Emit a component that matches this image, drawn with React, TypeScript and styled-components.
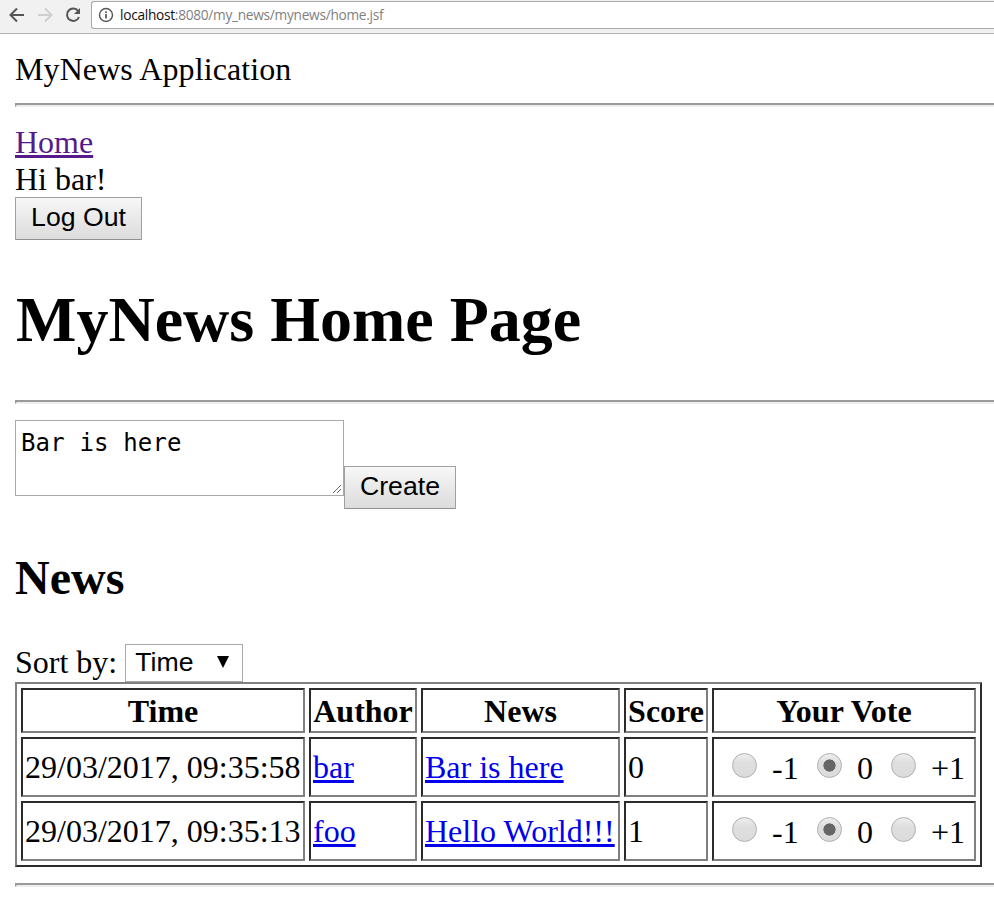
import React from "react";
import styled, { createGlobalStyle } from "styled-components";

const serif = '"Liberation Serif", "Times New Roman", serif';
const sans = '"Liberation Sans", Arial, sans-serif';

const Global = createGlobalStyle`
  * { box-sizing: border-box; }
  html, body { margin: 0; background: #fff; overflow: hidden; }
  body { font: 32px/37px ${serif}; color: #000; }
`;

const Screen = styled.div`
  width: 994px;
  height: 900px;
  overflow: hidden;
`;

const Toolbar = styled.header`
  height: 34px;
  padding: 1px 0 4px 8px;
  background: #f1f1f1;
  border-bottom: 1px solid #b4b4b4;
  display: flex;
  align-items: center;
`;

const NavIcon = styled.svg<{ $faded?: boolean }>`
  width: 18px;
  height: 18px;
  margin-right: 10px;
  flex: none;
  fill: none;
  stroke: ${(p) => (p.$faded ? "#d0d0d0" : "#555")};
  stroke-width: 2;
`;

const AddressBar = styled.div`
  flex: 1;
  height: 28px;
  margin-left: -1px;
  padding-left: 6px;
  display: flex;
  align-items: center;
  gap: 6px;
  background: #fff;
  border: 1px solid #a9a9a9;
  border-right: 0;
  border-radius: 3px 0 0 3px;
  font: 13.7px/20px "Open Sans", sans-serif;
  letter-spacing: -0.28px;
  color: #808080;
`;

const Host = styled.span`
  color: #111;
`;

const InfoIcon = styled.svg`
  width: 16px;
  height: 16px;
  fill: none;
  stroke: #555;
  stroke-width: 1.4;
`;

const Page = styled.main`
  padding: 16px 0 0 15px;
`;

const Line = styled.div<{ $spacing?: number }>`
  height: 37px;
  padding-top: 1px;
  letter-spacing: ${(p) => p.$spacing ?? 0}px;
  white-space: pre;
`;

const Rule = styled.hr`
  height: 4px;
  margin: 16px 0;
  border: 2px solid;
  border-color: #9a9a9a #eee #eee #9a9a9a;
  border-right: 0;
`;

const Link = styled.a<{ $visited?: boolean }>`
  color: ${(p) => (p.$visited ? "#551a8b" : "#0000ee")};
  text-decoration: underline;
  text-decoration-thickness: 3px;
  text-underline-offset: 2px;
  text-decoration-skip-ink: none;
`;

const Button = styled.button<{ $width: number }>`
  display: block;
  width: ${(p) => p.$width}px;
  height: 43px;
  padding: 0 0 3px;
  border: 1px solid #a0a0a0;
  border-bottom-color: #909090;
  border-radius: 1px;
  background: linear-gradient(#f7f7f7, #dcdcdc);
  font: 26.67px/30px ${sans};
  color: #000;
`;

const Title = styled.h1`
  height: 74px;
  margin: 43px 0;
  padding-left: 1px;
  font: bold 64px/74px ${serif};
`;

const Subtitle = styled.h2`
  height: 55px;
  margin: 41px 0 38px;
  font: bold 48px/55px ${serif};
`;

const CreateForm = styled.form`
  display: flex;
  align-items: flex-start;
  height: 89px;

  ${Button} {
    margin-top: 46px;
  }
`;

const Message = styled.div`
  position: relative;
  width: 329px;
  height: 76px;
  padding: 7px 5px;
  border: 1px solid #a9a9a9;
  font: 24px/30px "DejaVu Sans Mono", monospace;
  letter-spacing: 0.15px;
`;

const Grip = styled.svg`
  position: absolute;
  right: 2px;
  bottom: 2px;
  width: 8px;
  height: 8px;
  stroke: #666;
`;

const SortRow = styled.div`
  display: flex;
  height: 39px;
`;

const SortLabel = styled.span`
  padding-top: 1px;
`;

const SortBox = styled.div`
  width: 118px;
  height: 38px;
  margin: 1px 0 0 8px;
  padding: 0 13px 3px 9px;
  display: flex;
  align-items: center;
  justify-content: space-between;
  border: 1px solid #a9a9a9;
  font: 26.67px/30px ${sans};
`;

const Arrow = styled.svg`
  width: 12px;
  height: 12px;
  margin-top: 1px;
  fill: #000;
`;

const NewsTable = styled.table`
  width: 967px;
  height: 185px;
  table-layout: fixed;
  border-collapse: separate;
  border-spacing: 4px;
  border: 2px solid;
  border-color: #808080 #2c2c2c #2c2c2c #808080;
`;

const Column = styled.col<{ $width: number }>`
  width: ${(p) => p.$width}px;
`;

const Row = styled.tr<{ $height: number }>`
  height: ${(p) => p.$height}px;
`;

const cellBorder = "border: 2px solid; border-color: #2c2c2c #808080 #808080 #2c2c2c;";

const HeadCell = styled.th`
  ${cellBorder}
  padding: 2px 0 0;
  text-align: center;
  font-weight: bold;
  white-space: nowrap;
`;

const Cell = styled.td`
  ${cellBorder}
  padding: 0 2px;
  white-space: nowrap;
`;

const Votes = styled.div`
  display: flex;
  padding: 2px 0 0 16px;
`;

const Vote = styled.label<{ $width: number }>`
  display: flex;
  width: ${(p) => p.$width}px;
  gap: 15px;
`;

const Radio = styled.span<{ $on: boolean }>`
  flex: none;
  width: 25px;
  height: 25px;
  margin-top: 3px;
  border: 1px solid #b0b0b0;
  border-radius: 50%;
  background: ${(p) => (p.$on ? "radial-gradient(circle, #666 0 5.8px, transparent 6.4px), " : "")}
    linear-gradient(#eee, #dedede 38%, #dcdcdc);
`;

const rows = [
  { time: "29/03/2017, 09:35:58", author: "bar", news: "Bar is here", score: 0 },
  { time: "29/03/2017, 09:35:13", author: "foo", news: "Hello World!!!", score: 1 },
];

const options = [
  { label: "-1", width: 85 },
  { label: "0", width: 74 },
  { label: "+1", width: 76 },
];

export default function App() {
  return (
    <Screen>
      <Global />
      <Toolbar>
        <NavIcon viewBox="0 0 18 18">
          <path d="M16 9H3M9 2.500 2.500 9 9 15.500" />
        </NavIcon>
        <NavIcon viewBox="0 0 18 18" $faded>
          <path d="M2 9h13M9 2.500 15.500 9 9 15.500" />
        </NavIcon>
        <NavIcon viewBox="0 0 18 18">
          <path d="M14.200 5A6.200 6.200 0 1 0 15 11" />
          <path d="M16 2v6h-6z" fill="#555" stroke="none" />
        </NavIcon>
        <AddressBar>
          <InfoIcon viewBox="0 0 16 16">
            <circle cx="8" cy="8" r="6.500" />
            <path d="M8 7v4.500M8 4.300v1.700" strokeWidth="1.700" />
          </InfoIcon>
          <span>
            <Host>localhost</Host>:8080/my_news/mynews/home.jsf
          </span>
        </AddressBar>
      </Toolbar>
      <Page>
        <Line $spacing={0.1}>MyNews Application</Line>
        <Rule />
        <Line>
          <Link $visited>Home</Link>
        </Line>
        <Line>Hi bar!</Line>
        <Button $width={127}>Log Out</Button>
        <Title>MyNews Home Page</Title>
        <Rule />
        <CreateForm>
          <Message>
            Bar is here
            <Grip viewBox="0 0 8 8">
              <path d="M0 8 8 0M4 8 8 4" />
            </Grip>
          </Message>
          <Button type="button" $width={112}>Create</Button>
        </CreateForm>
        <Subtitle>News</Subtitle>
        <SortRow>
          <SortLabel>Sort by:</SortLabel>
          <SortBox>
            Time
            <Arrow viewBox="0 0 12 12">
              <path d="M0 0h12L6 12z" />
            </Arrow>
          </SortBox>
        </SortRow>
        <NewsTable>
          <colgroup>
            {[284, 108, 199, 84, 264].map((w) => (
              <Column key={w} $width={w} />
            ))}
          </colgroup>
          <tbody>
            <Row $height={45}>
              {["Time", "Author", "News", "Score", "Your Vote"].map((name) => (
                <HeadCell key={name}>{name}</HeadCell>
              ))}
            </Row>
            {rows.map((row) => (
              <Row key={row.time} $height={60}>
                <Cell>{row.time}</Cell>
                <Cell>
                  <Link>{row.author}</Link>
                </Cell>
                <Cell>
                  <Link>{row.news}</Link>
                </Cell>
                <Cell>{row.score}</Cell>
                <Cell>
                  <Votes>
                    {options.map((option) => (
                      <Vote key={option.label} $width={option.width}>
                        <Radio $on={option.label === "0"} />
                        {option.label}
                      </Vote>
                    ))}
                  </Votes>
                </Cell>
              </Row>
            ))}
          </tbody>
        </NewsTable>
        <Rule />
      </Page>
    </Screen>
  );
}
